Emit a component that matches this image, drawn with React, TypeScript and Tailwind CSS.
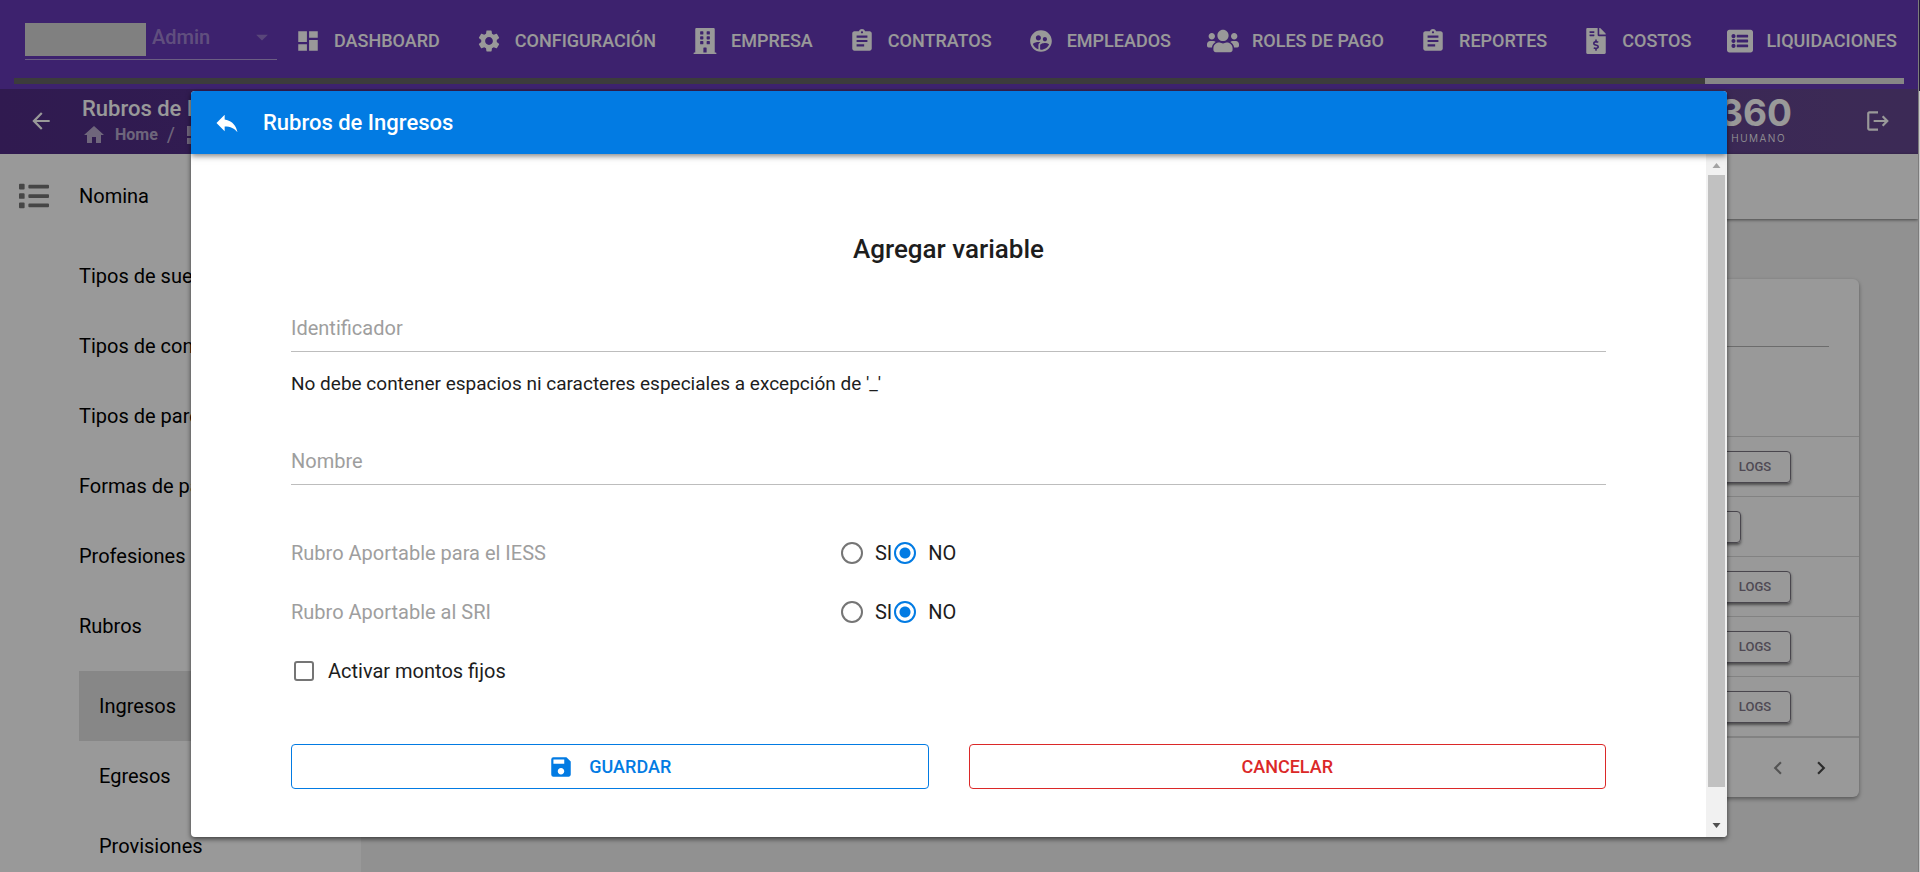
import React, { useState } from 'react';
import {
  MdArrowBack,
  MdArrowDropDown,
  MdAssignment,
  MdChevronLeft,
  MdChevronRight,
  MdDashboard,
  MdHome,
  MdReply,
  MdSave,
  MdSettings,
  MdSupervisedUserCircle,
} from 'react-icons/md';
import { FaBuilding, FaFileInvoiceDollar, FaList, FaListAlt, FaUsers } from 'react-icons/fa';
import type { IconType } from 'react-icons';

interface NavItem {
  label: string;
  icon: IconType;
  wide?: boolean;
}

const navItems: NavItem[] = [
  { label: 'DASHBOARD', icon: MdDashboard },
  { label: 'CONFIGURACIÓN', icon: MdSettings },
  { label: 'EMPRESA', icon: FaBuilding },
  { label: 'CONTRATOS', icon: MdAssignment },
  { label: 'EMPLEADOS', icon: MdSupervisedUserCircle },
  { label: 'ROLES DE PAGO', icon: FaUsers, wide: true },
  { label: 'REPORTES', icon: MdAssignment },
  { label: 'COSTOS', icon: FaFileInvoiceDollar },
  { label: 'LIQUIDACIONES', icon: FaListAlt },
];

const menuItems = [
  'Tipos de sueldo',
  'Tipos de contrato',
  'Tipos de parentesco',
  'Formas de pago',
  'Profesiones',
  'Rubros',
];

const rubroItems = ['Ingresos', 'Egresos', 'Provisiones'];

const rows = [
  { id: 1, inset: false },
  { id: 2, inset: true },
  { id: 3, inset: false },
  { id: 4, inset: false },
  { id: 5, inset: false },
];

function TopNav() {
  return (
    <header className="h-[89px] bg-[#673ab7] px-[14px] text-white">
      <div className="flex h-[78px] items-center pt-[4px] pl-[11px]">
        <div className="flex h-[37px] w-[252px] shrink-0 items-start border-b border-white/50">
          <span className="h-[33px] w-[121px] bg-[#d5d5d5]" />
          <button className="flex flex-1 items-center justify-between pl-[6px] text-xl font-medium leading-6 text-white/40">
            Admin
            <MdArrowDropDown className="h-[28px] w-[30px] text-white/30" />
          </button>
        </div>
        <nav className="ml-[18px] flex min-w-0 flex-1 items-center justify-between pr-[7px]">
          {navItems.map(({ label, icon: Icon, wide }) => (
            <a key={label} href="#" className="flex items-center gap-[13px] text-lg font-medium leading-6">
              <Icon className={wide ? 'h-[26px] w-[32px]' : 'h-[26px] w-[26px]'} />
              {label}
            </a>
          ))}
        </nav>
      </div>
      <div className="flex h-[6px] justify-end bg-[#646464]">
        <div className="w-[199px] bg-[#dfdfdf]" />
      </div>
    </header>
  );
}

function TitleBar() {
  return (
    <div className="flex h-[65px] items-center justify-between bg-linear-to-r from-[#502c86] to-[#65478f] pr-[27px] pb-[2px] pl-[28px] text-white">
      <div className="flex items-center">
        <button aria-label="Volver">
          <MdArrowBack className="h-[26px] w-[26px]" />
        </button>
        <div className="ml-[28px]">
          <h1 className="text-[22px] font-medium leading-7">Rubros de Ingresos</h1>
          <div className="flex items-center gap-[9px] text-base font-bold leading-6 text-white/60">
            <MdHome className="h-[24px] w-[24px]" />
            <a href="#">Home</a>
            <span className="text-xl font-normal leading-6">/</span>
            <MdDashboard className="h-[24px] w-[24px]" />
            <a href="#">Rubros</a>
          </div>
        </div>
      </div>
      <div className="flex items-center">
        <svg viewBox="0 0 160 56" className="mr-[73px] h-[56px] w-[160px]" fill="#fff">
          <text x="160" y="33" textAnchor="end" fontFamily="Inter" fontWeight="700" fontSize="37">
            360
          </text>
          <text x="154" y="49" textAnchor="end" fontFamily="Inter" fontWeight="300" fontSize="10" letterSpacing="1.5">
            TALENTO HUMANO
          </text>
        </svg>
        <button aria-label="Salir">
          <svg viewBox="0 0 24 24" className="h-[26px] w-[26px]" fill="currentColor">
            <path d="M17 7l-1.41 1.41L18.17 11H8v2h10.17l-2.58 2.58L17 17l5-5zM4 5h8V3H4c-1.1 0-2 .9-2 2v14c0 1.1.9 2 2 2h8v-2H4z" />
          </svg>
        </button>
      </div>
    </div>
  );
}

function Sidebar() {
  return (
    <aside className="flex w-[361px] shrink-0 bg-white text-xl text-black">
      <div className="w-[79px] shrink-0 pt-[27px] pl-[19px]">
        <FaList className="h-[30px] w-[30px] text-[#757575]" />
      </div>
      <div className="flex-1">
        <div className="flex h-[87px] items-start pt-[28px] leading-7">Nomina</div>
        {menuItems.map((item) => (
          <a key={item} href="#" className="flex h-[70px] items-center">
            {item}
          </a>
        ))}
        <div className="pt-[10px]">
          {rubroItems.map((item, i) => (
            <a
              key={item}
              href="#"
              className={`flex h-[70px] items-center pl-[20px] ${i === 0 ? 'bg-[#e2e2e2]' : ''}`}
            >
              {item}
            </a>
          ))}
        </div>
      </div>
    </aside>
  );
}

function RubrosTable() {
  return (
    <main className="flex-1 bg-[#f2f2f2]">
      <div className="h-[65px] bg-white shadow-[0_1px_3px_rgba(0,0,0,0.5)]" />
      <div className="mt-[60px] mr-[59px] ml-[60px] rounded-md bg-white shadow-[0_2px_4px_rgba(0,0,0,0.4)]">
        <div className="h-[157px] px-[30px] pt-[27px]">
          <input aria-label="Buscar" className="block h-[41px] w-full border-b border-[#b4b4b4] outline-none" />
        </div>
        <table className="w-full">
          <tbody>
            {rows.map((row) => (
              <tr key={row.id} className="h-[60px] border-y border-[#d9d9d9]">
                <td className={row.inset ? 'pr-[118px]' : 'pr-[68px]'}>
                  <div className="flex justify-end">
                    <button className="h-[32px] w-[72px] rounded border border-[#7a7580] text-[13px] font-medium text-[#847b8c] shadow-[0_2px_3px_rgba(0,0,0,0.5)]">
                      LOGS
                    </button>
                  </div>
                </td>
              </tr>
            ))}
          </tbody>
        </table>
        <div className="flex h-[60px] items-center justify-end gap-[17px] border-t border-[#d9d9d9] pr-[25px]">
          <button aria-label="Anterior" className="text-[#8c8c8c]">
            <MdChevronLeft className="h-[26px] w-[26px]" />
          </button>
          <button aria-label="Siguiente" className="text-[#4a4a4a]">
            <MdChevronRight className="h-[26px] w-[26px]" />
          </button>
        </div>
      </div>
    </main>
  );
}

interface YesNoProps {
  name: string;
  label: string;
}

function YesNo({ name, label }: YesNoProps) {
  const [value, setValue] = useState('NO');
  return (
    <div role="radiogroup" aria-labelledby={`${name}-label`} className="grid h-[59px] grid-cols-12 items-center">
      <span id={`${name}-label`} className="col-span-5 text-xl text-[#9e9e9e]">
        {label}
      </span>
      <div className="col-span-7 flex items-center gap-[2px] pl-[2px]">
        {['SI', 'NO'].map((option) => (
          <label key={option} className="flex items-center gap-[12px] text-xl">
            <input
              type="radio"
              name={name}
              value={option}
              checked={value === option}
              onChange={() => setValue(option)}
              className="h-[22px] w-[22px] appearance-none rounded-full border-2 border-[#757575] checked:border-[#027be3] checked:bg-[radial-gradient(circle,#027be3_5px,transparent_6px)]"
            />
            {option}
          </label>
        ))}
      </div>
    </div>
  );
}

function VariableForm() {
  return (
    <form className="min-w-0 flex-1 overflow-hidden px-[100px] pt-[75px] text-[#1d1d1d]">
      <h2 className="text-center text-[26px] font-medium leading-10">Agregar variable</h2>
      <input
        aria-label="Identificador"
        placeholder="Identificador"
        className="mt-[35px] block h-[48px] w-full border-b border-[#bdbdbd] text-xl outline-none placeholder:text-[#9e9e9e]"
      />
      <p className="mt-[18px] text-[19px] leading-7">
        No debe contener espacios ni caracteres especiales a excepción de '_'
      </p>
      <input
        aria-label="Nombre"
        placeholder="Nombre"
        className="mt-[39px] block h-[48px] w-full border-b border-[#bdbdbd] text-xl outline-none placeholder:text-[#9e9e9e]"
      />
      <div className="mt-[38px]">
        <YesNo name="iess" label="Rubro Aportable para el IESS" />
        <YesNo name="sri" label="Rubro Aportable al SRI" />
      </div>
      <label className="flex h-[59px] items-center gap-[14px] pl-[3px] text-xl">
        <input
          type="checkbox"
          className="h-[20px] w-[20px] appearance-none rounded-[3px] border-2 border-[#757575] checked:bg-[#027be3]"
        />
        Activar montos fijos
      </label>
      <div className="mt-[44px] grid grid-cols-2 gap-[40px] text-lg font-medium">
        <button
          type="button"
          className="flex h-[45px] items-center justify-center gap-[15px] rounded border border-[#027be3] text-[#027be3]"
        >
          <MdSave className="h-[26px] w-[26px]" />
          GUARDAR
        </button>
        <button
          type="button"
          className="flex h-[45px] items-center justify-center rounded border border-[#db2828] text-[#db2828]"
        >
          CANCELAR
        </button>
      </div>
    </form>
  );
}

function VariableDialog() {
  return (
    <div className="absolute inset-0 flex items-center justify-center bg-black/40 pt-[56px]">
      <div
        role="dialog"
        aria-label="Rubros de Ingresos"
        className="flex h-[746px] w-[80vw] flex-col overflow-hidden rounded bg-white shadow-[0_2px_5px_rgba(0,0,0,0.6)]"
      >
        <div className="z-10 flex h-[63px] shrink-0 items-center bg-[#027be3] pl-[22px] text-white shadow-[0_2px_6px_rgba(0,0,0,0.5)]">
          <button aria-label="Cerrar">
            <MdReply className="h-[28px] w-[28px]" />
          </button>
          <h2 className="ml-[22px] text-[22px] font-medium">Rubros de Ingresos</h2>
        </div>
        <div className="flex min-h-0 flex-1">
          <VariableForm />
          {/* Scroll bar */}
          <div className="flex w-[21px] shrink-0 flex-col items-center bg-[#f1f1f1] px-[2px]">
            <svg viewBox="0 0 21 21" className="h-[21px] w-[21px]" fill="#a3a3a3">
              <path d="M6.5 14 10.5 9l4 5z" />
            </svg>
            <div className="w-full flex-1 bg-[#c1c1c1]" />
            <svg viewBox="0 0 21 50" className="h-[50px] w-[21px]" fill="#505050">
              <path d="M6.5 36l4 5 4-5z" />
            </svg>
          </div>
        </div>
      </div>
    </div>
  );
}

export default function App() {
  return (
    <div className="flex h-screen font-[Roboto,sans-serif]">
      <div className="relative flex min-w-0 flex-1 flex-col overflow-hidden">
        <TopNav />
        <TitleBar />
        <div className="flex min-h-0 flex-1">
          <Sidebar />
          <RubrosTable />
        </div>
        <VariableDialog />
      </div>
      {/* Window edge */}
      <div className="w-[2px] border-l border-[#7c7c7c] bg-[#c8c8c8]">
        <div className="h-[91px] bg-[#241a3a]" />
      </div>
    </div>
  );
}
